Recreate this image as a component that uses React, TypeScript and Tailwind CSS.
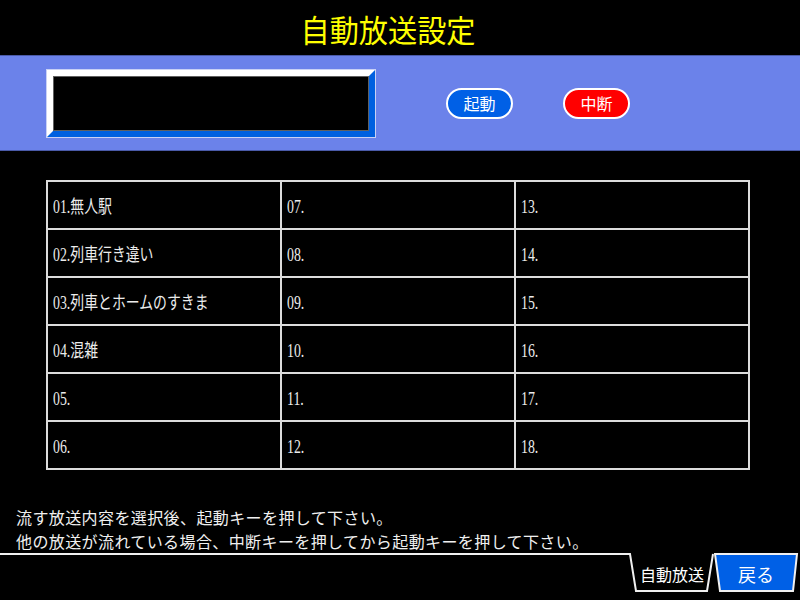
const cells = [
  ["01.無人駅", "07.", "13."],
  ["02.列車行き違い", "08.", "14."],
  ["03.列車とホームのすきま", "09.", "15."],
  ["04.混雑", "10.", "16."],
  ["05.", "11.", "17."],
  ["06.", "12.", "18."],
];

const jp = { fontFamily: '"Noto Sans CJK JP", "Noto Sans", sans-serif' };
const cellFont = { fontFamily: '"Liberation Serif", "Noto Sans CJK JP", serif' };

export default function App() {
  return (
    <div className="w-[800px] h-[600px] overflow-hidden bg-black text-white" style={jp}>
      <div className="h-[55px] flex items-center justify-center pt-[2px] pr-[24px]">
        <h1 className="text-[31px] leading-none text-[#ffff00] scale-x-[0.94]">自動放送設定</h1>
      </div>

      <div className="h-[96px] bg-[#6b82ea] border-y border-[#4a5aa8] flex items-center pl-[47px]">
        <div className="w-[328px] h-[67px] border-[6px] border-t-white border-l-white border-r-[#0060e0] border-b-[#0060e0] outline outline-1 outline-[#c9d1f5]">
          <div className="w-full h-full bg-black border border-[#606060]" />
        </div>
        <button className="ml-[71px] w-[67px] h-[31px] rounded-full bg-[#0060e6] border-2 border-white text-[16px] leading-none text-white">
          起動
        </button>
        <button className="ml-[50px] w-[67px] h-[31px] rounded-full bg-[#ff0000] border-2 border-white text-[16px] leading-none text-white">
          中断
        </button>
      </div>

      <div className="mt-[29px] ml-[46px] w-[704px] h-[290px] bg-[#dcdcdc] p-[2px] grid grid-cols-[232px_232px_232px] grid-rows-6 gap-[2px]">
        {cells.flat().map((label, i) => (
          <div key={i} className="bg-black flex items-center pl-[5px] pt-[4px] text-[18px] text-[#ececec]" style={cellFont}>
            <span className="inline-block origin-left scale-x-[0.77] whitespace-nowrap">{label}</span>
          </div>
        ))}
      </div>

      <div className="h-[83px] pt-[35px] pl-[16px] text-[16px] leading-[24px] tracking-[0.4px] text-[#f0f0f0]">
        <p>流す放送内容を選択後、起動キーを押して下さい。</p>
        <p>他の放送が流れている場合、中断キーを押してから起動キーを押して下さい。</p>
      </div>

      <div className="relative h-[41px]">
        <svg className="absolute inset-0" width="800" height="41" viewBox="0 0 800 41">
          <path d="M0 1 H630 L636 38 H707 L713 1" fill="none" stroke="#f0f0f0" strokeWidth="2" />
          <path d="M715 1 H797 L793 38 H720 Z" fill="#0060e6" stroke="#f0f0f0" strokeWidth="2" />
        </svg>
        <div className="relative flex h-full items-center">
          <div className="flex-1" />
          <div className="w-[84px] text-center text-[16px] leading-none text-white">自動放送</div>
          <div className="w-[84px] text-center text-[18px] leading-none text-white">戻る</div>
          <div className="w-[2px]" />
        </div>
      </div>
    </div>
  );
}
